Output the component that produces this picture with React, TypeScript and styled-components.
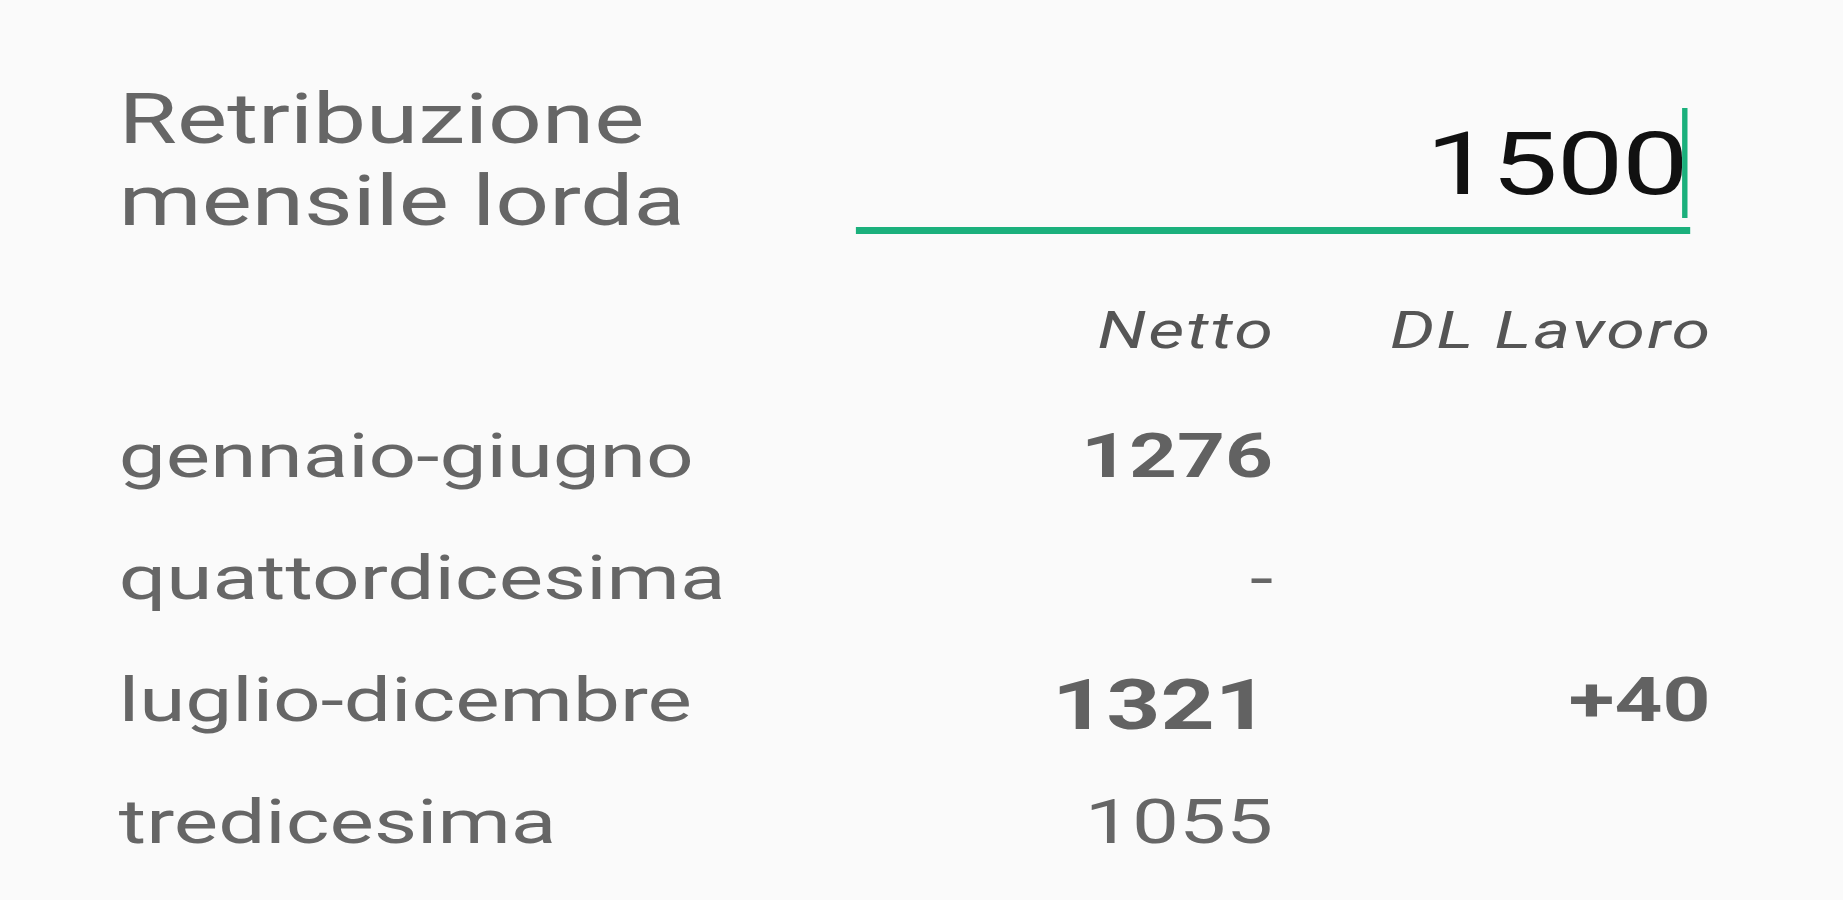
import styled, { createGlobalStyle } from "styled-components";

// the reference is a phone screen stretched sideways, so the whole stage is widened
const STRETCH = 1.35;
const GREEN = "#1bb07c";

const GlobalStyle = createGlobalStyle`
  html, body {
    margin: 0;
    padding: 0;
    background: #fafafa;
  }
  body {
    font-family: Roboto, "Noto Sans", sans-serif;
    overflow: hidden;
  }
`;

const Stage = styled.div`
  box-sizing: border-box;
  width: ${Math.round(1843 / STRETCH)}px;
  height: 900px;
  padding: 78px 0 0 88px;
  transform: scaleX(${STRETCH});
  transform-origin: 0 0;
`;

const Header = styled.div`
  display: grid;
  grid-template-columns: 546px 618px;
  align-items: start;
`;

const FieldLabel = styled.h1`
  margin: 0;
  font-size: 70px;
  font-weight: 400;
  line-height: normal;
  color: #666;
`;

const InputField = styled.div`
  display: flex;
  flex-direction: column;
  margin-top: 30px;
`;

const ValueRow = styled.div`
  display: flex;
  justify-content: flex-end;
  align-items: center;
  height: 110px;
  padding-right: 2px;
`;

const Value = styled.span`
  font-size: 88px;
  line-height: 103px;
  letter-spacing: -1px;
  color: #111;
  margin-right: -4px;
`;

const Caret = styled.span`
  width: 4px;
  height: 110px;
  background: ${GREEN};
`;

const Underline = styled.div`
  margin-top: 9px;
  height: 7px;
  background: ${GREEN};
`;

const Table = styled.div`
  display: grid;
  grid-template-columns: 552px 303px 324px;
  grid-template-rows: 118px;
  grid-auto-rows: 122px;
  align-items: start;
  margin-top: 60px;
`;

const ColumnHead = styled.div`
  font-size: 52px;
  font-style: italic;
  letter-spacing: 1.5px;
  margin-right: -1.5px;
  line-height: 57px;
  text-align: right;
  color: #555;
`;

const RowLabel = styled.div`
  font-size: 62px;
  line-height: 72px;
  color: #666;
  white-space: nowrap;
`;

const Amount = styled.div<{ $bold?: boolean; $big?: boolean }>`
  font-size: ${(p) => (p.$big ? 70 : 62)}px;
  font-weight: ${(p) => (p.$bold ? 700 : 400)};
  line-height: ${(p) => (p.$big ? "normal" : "72px")};
  padding-right: ${(p) => (p.$big ? 3 : 0)}px;
  text-align: right;
  color: ${(p) => (p.$bold ? "#626262" : "#666")};
`;

interface Period {
  label: string;
  netto: string;
  bold?: boolean;
  big?: boolean;
  bonus?: string;
}

const periods: Period[] = [
  { label: "gennaio-giugno", netto: "1276", bold: true },
  { label: "quattordicesima", netto: "-" },
  { label: "luglio-dicembre", netto: "1321", bold: true, big: true, bonus: "+40" },
  { label: "tredicesima", netto: "1055" },
];

const App = () => {
  return (
    <>
      <GlobalStyle />
      <Stage>
        <Header>
          <FieldLabel>
            Retribuzione
            <br />
            mensile lorda
          </FieldLabel>
          <InputField>
            <ValueRow>
              <Value>1500</Value>
              <Caret />
            </ValueRow>
            <Underline />
          </InputField>
        </Header>

        <Table>
          <div />
          <ColumnHead>Netto</ColumnHead>
          <ColumnHead>DL Lavoro</ColumnHead>
          {periods.map((p) => (
            <>
              <RowLabel key={p.label}>{p.label}</RowLabel>
              <Amount $bold={p.bold} $big={p.big}>
                {p.netto}
              </Amount>
              <Amount $bold>{p.bonus ?? ""}</Amount>
            </>
          ))}
        </Table>
      </Stage>
    </>
  );
};

export default App;
